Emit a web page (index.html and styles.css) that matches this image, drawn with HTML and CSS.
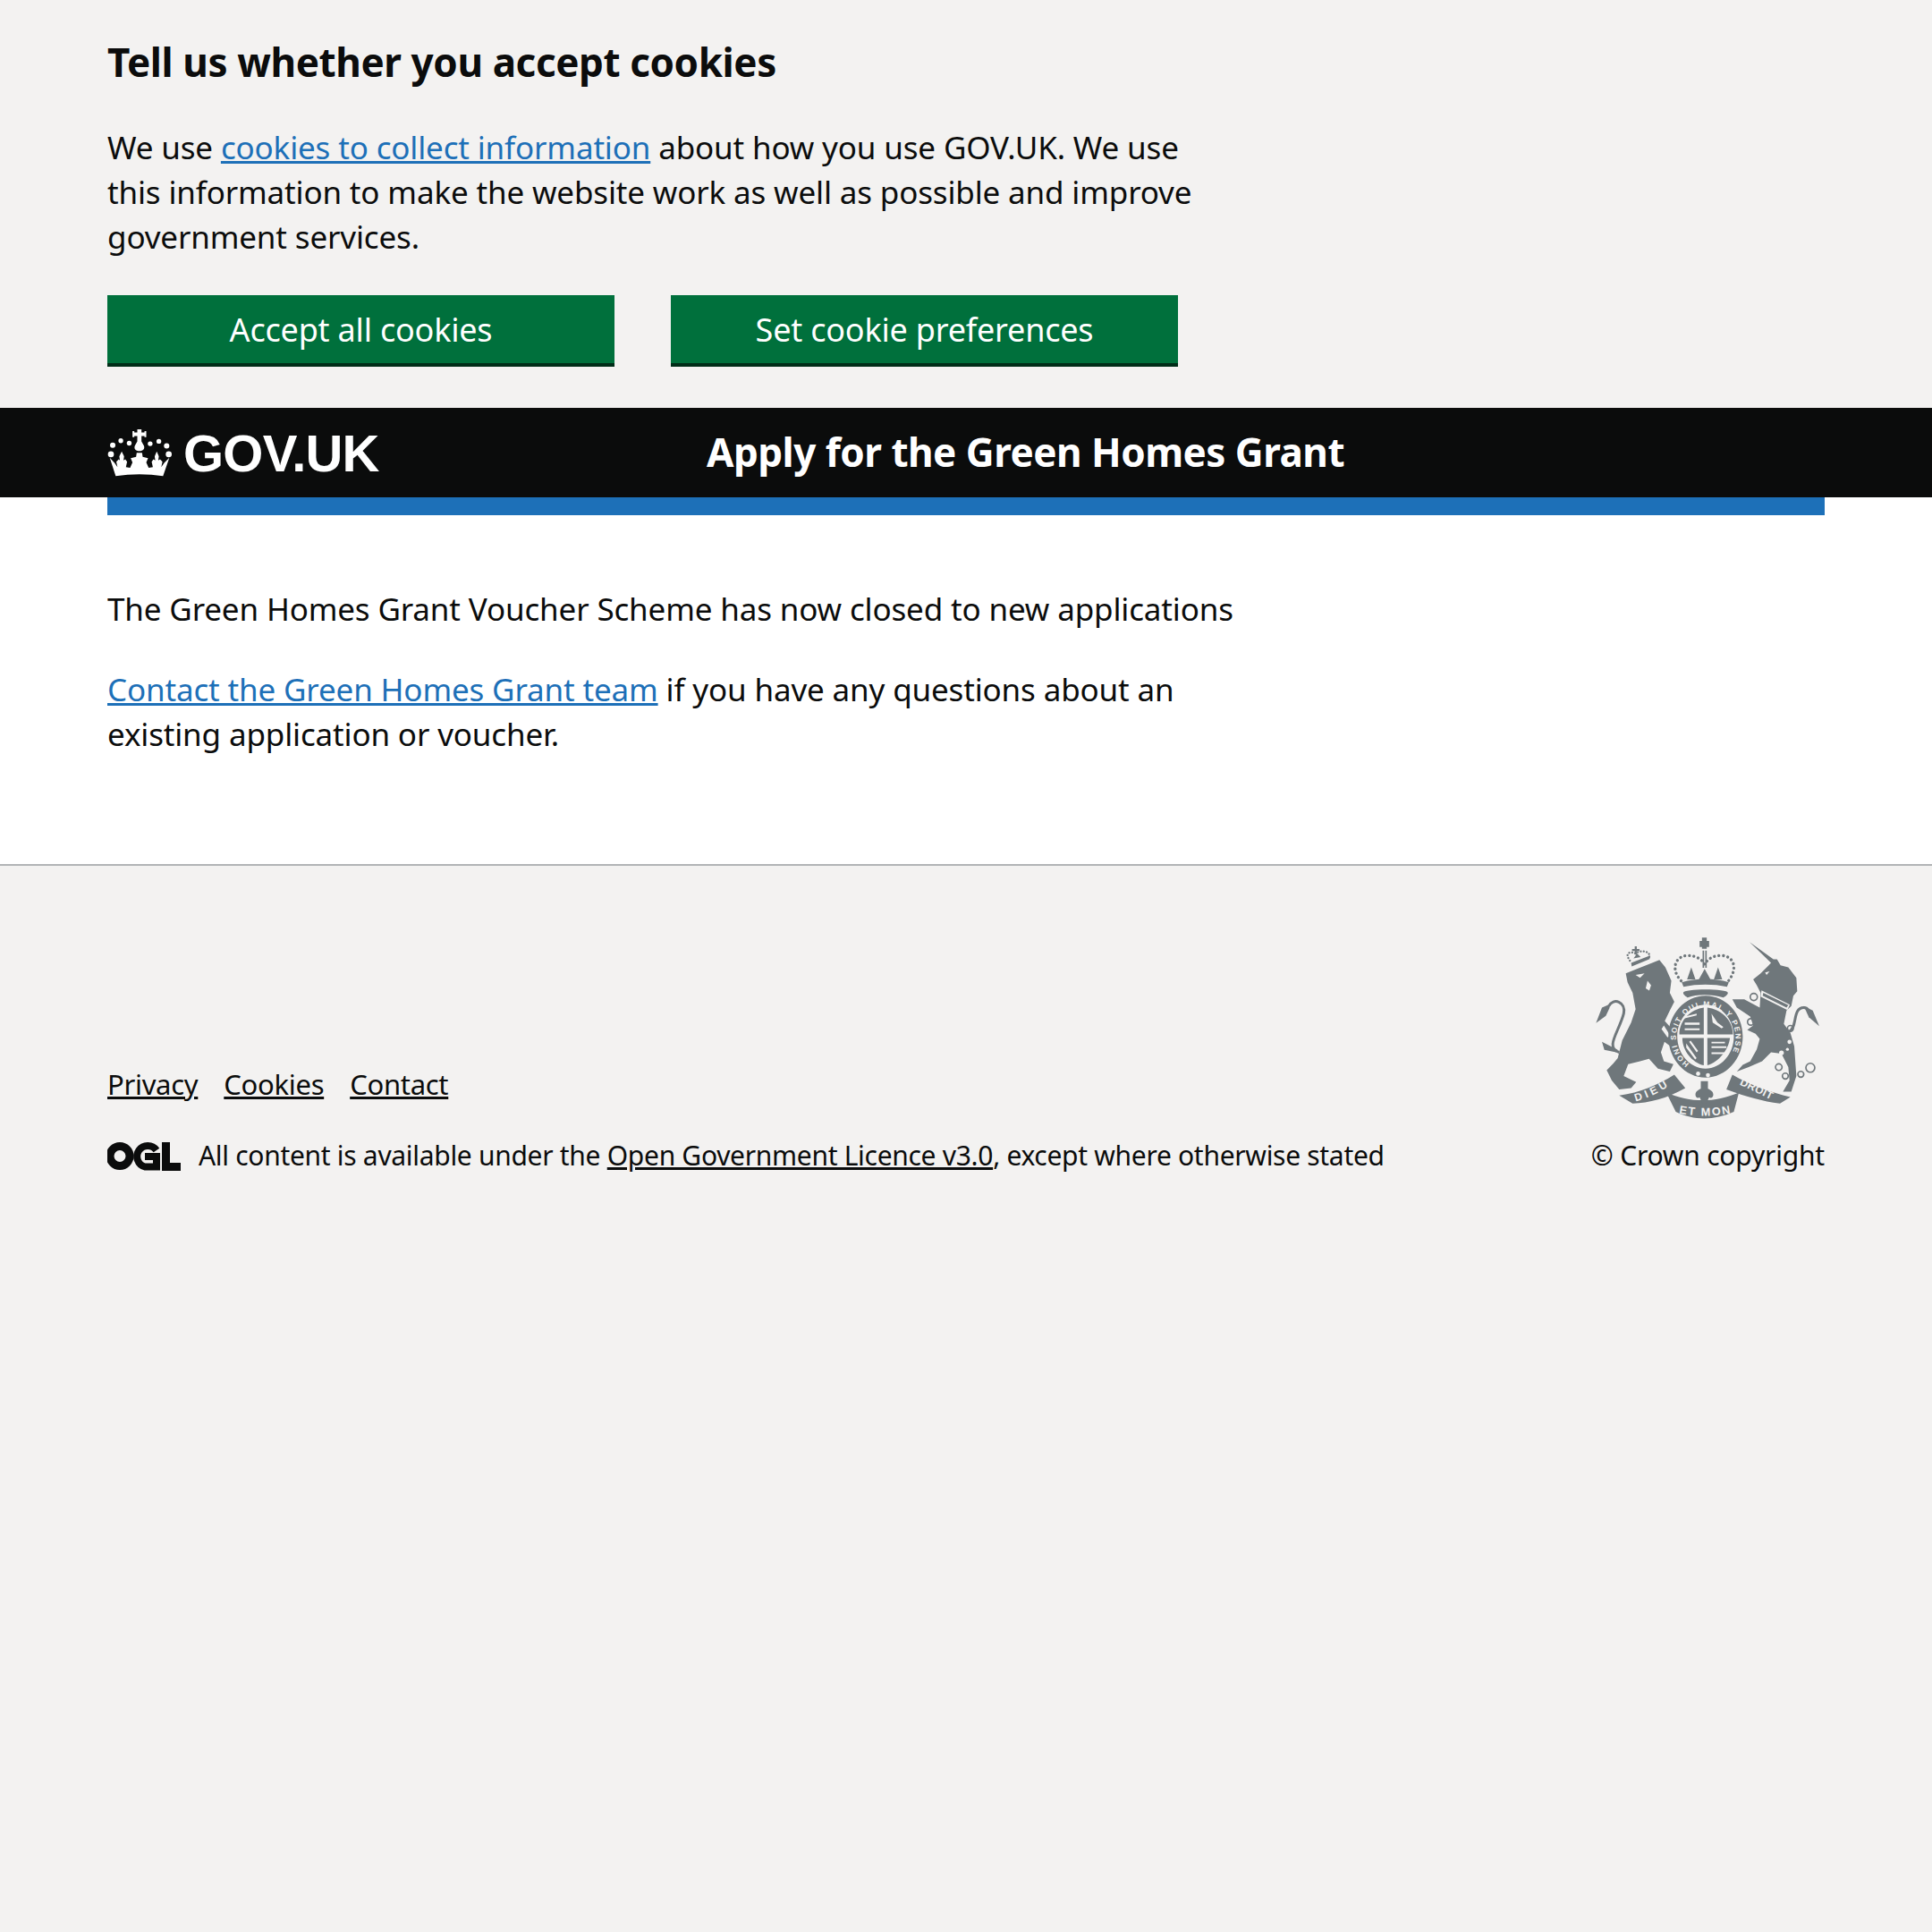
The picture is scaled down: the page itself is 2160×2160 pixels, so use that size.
FILE: index.html
```html
<!DOCTYPE html>
<html>
<head>
	<meta charset="utf-8">
	<title>Apply for the Green Homes Grant</title>
	<link rel="stylesheet" href="styles.css">
</head>
<body>
	<div class="cookie-banner">
		<h2 class="cookie-title">Tell us whether you accept cookies</h2>
		<p class="cookie-text">We use <a href="#" class="link">cookies to collect information</a> about how you use GOV.UK. We use this information to make the website work as well as possible and improve government services.</p>
		<div class="cookie-buttons">
			<a href="#" class="button">Accept all cookies</a>
			<a href="#" class="button">Set cookie preferences</a>
		</div>
	</div>

	<header class="header">
		<a href="#" class="logo">
			<svg class="crown" viewBox="0 0 215 158" fill="#fff">
				<circle cx="12" cy="83" r="10"/><circle cx="18" cy="53" r="9"/><circle cx="45" cy="38" r="8"/><circle cx="73" cy="46" r="8"/>
				<circle cx="143" cy="48" r="8"/><circle cx="172" cy="40" r="8"/><circle cx="198" cy="55" r="9"/><circle cx="205" cy="83" r="10"/>
				<path d="M100 0h14v10h10v-4h6v20h-6v-4h-10v18l8 14c4 10-2 18-15 18s-19-8-15-18l8-14V22H90v4h-6V6h6v4h10z"/>
				<path d="M28 156L8 95 24 112 34 126 30 108 38 100 42 104 40 90 48 74 56 90 54 104 60 100 66 108 62 126 76 128 84 110 78 96 96 92 98 78 116 78 118 92 136 96 130 110 138 128 152 126 148 108 154 100 160 104 158 90 165 74 172 90 170 104 176 100 184 108 180 126 190 112 207 95 186 156C135 148 80 148 28 156z"/>
			</svg>
			<span class="logo-text">GOV.UK</span>
		</a>
		<a href="#" class="service-name">Apply for the Green Homes Grant</a>
	</header>

	<div class="width-container">
		<div class="header-rule"></div>
		<main class="main">
			<p class="body-text">The Green Homes Grant Voucher Scheme has now closed to new applications</p>
			<p class="body-text"><a href="#" class="link">Contact the Green Homes Grant team</a> if you have any questions about an existing application or voucher.</p>
		</main>
	</div>

	<footer class="footer">
		<div class="footer-inner">
			<div class="footer-meta">
				<ul class="footer-links">
					<li><a href="#">Privacy</a></li>
					<li><a href="#">Cookies</a></li>
					<li><a href="#">Contact</a></li>
				</ul>
				<div class="licence">
					<svg class="ogl" viewBox="0 0 82 33">
						<circle cx="14" cy="16.5" r="11" fill="none" stroke="#0b0c0c" stroke-width="9"/>
						<path d="M55 10A12 12 0 1 0 42 28.500h13V17H42" fill="none" stroke="#0b0c0c" stroke-width="8"/>
						<path d="M61 1h9v23h12v9H61z" fill="#0b0c0c"/>
					</svg>
					<span>All content is available under the <a href="#">Open Government Licence v3.0</a>, except where otherwise stated</span>
				</div>
			</div>
			<div class="footer-crest">
				<svg class="crest" viewBox="60 45 770 625" fill="#6f777b">
					<!-- lion -->
					<path d="M172 175L215 158 255 142 285 130 305 155 325 200 320 240 335 270 320 300 303 335 330 365 345 400 322 420 302 405 290 440 300 470 332 480 320 505 280 495 250 462 220 470 180 480 165 520 207 540 190 560 150 565 125 535 108 500 130 478 145 460 160 400 190 340 205 295 195 240 178 205z"/>
					<path d="M150 440C100 425 150 370 165 310c8-40-35-55-50-25" fill="none" stroke="#6f777b" stroke-width="9"/>
					<path d="M120 278L92 290 72 342 105 318 117 292zM92 405L145 432 140 440 100 432z"/>
					<path d="M205 180L235 175 220 190zM245 200L257 215 251 233 239 225zM300 350L322 385 312 390 292 362z" fill="#f3f2f1"/>
					<!-- lion crown -->
					<path d="M192 152L252 127 254 115 190 140z"/>
					<g fill="none" stroke="#6f777b" stroke-width="7" stroke-dasharray="0.1 10" stroke-linecap="round">
						<path d="M186 132C165 105 190 100 205 108 220 95 260 100 250 122"/>
					</g>
					<path d="M202 84h7v9h9v7h-9v12h-7v-12h-9v-7h9zM198 125L210 108 222 120z"/>
					<!-- unicorn -->
					<path d="M588 70L668 128 680 128 692 148 718 155 745 190 748 235 735 250 728 285 712 300 703 345 725 375 738 420 745 520 728 572 700 572 722 535 718 490 695 445 660 440 630 470 585 490 545 505 565 482 590 470 612 430 622 395 608 378 580 365 600 350 590 320 545 290 530 262 570 262 622 290 625 240 612 215 600 195 625 175 650 150 660 140z"/>
					<path d="M720 370c30-10 10-80 50-80 15 0 20 15 15 20" fill="none" stroke="#6f777b" stroke-width="9"/>
					<path d="M770 285L800 300 822 352 787 322z"/>
					<path d="M628 232L723 280 715 298 625 253zM640 172L655 168 645 180z" fill="#f3f2f1"/>
					<path d="M634 240L718 282 712 290 632 250z"/>
					<g fill="#f3f2f1"><circle cx="722" cy="405" r="7"/><circle cx="695" cy="442" r="8"/><circle cx="715" cy="430" r="5"/></g>
					<g fill="none" stroke="#6f777b" stroke-width="5">
						<circle cx="602" cy="254" r="12"/><circle cx="592" cy="338" r="11"/><circle cx="725" cy="360" r="10"/>
						<circle cx="686" cy="490" r="11"/><circle cx="708" cy="520" r="10"/><circle cx="760" cy="514" r="10"/><circle cx="792" cy="492" r="15"/>
					</g>
					<!-- crown -->
					<g fill="none" stroke="#6f777b" stroke-width="10" stroke-dasharray="0.1 15" stroke-linecap="round">
						<path d="M358 200C320 160 340 115 380 115c30 0 50 15 57 30 10-20 30-30 55-30 40 0 60 40 25 85"/>
					</g>
					<path d="M428 55h16v11h8v20h-8v6h-16v-6h-8V66h8zM430 98h5v58h-5zM439 98h5v58h-5zM360 205c50-15 110-15 158 0l-6 15c-45-10-100-10-146 0z"/>
					<path d="M392 155L406 195H378zM437 160L459 200H415zM482 155L496 195H468z"/>
					<path d="M365 240c0-15 150-15 150 0 0 8-15 16-15 16-40-12-90-12-120 0 0 0-15-8-15-16z"/>
					<!-- garter -->
					<path fill-rule="evenodd" d="M440 250c68 0 125 60 125 137s-57 138-125 138-125-61-125-138 57-137 125-137zm0 30c-52 0-95 48-95 107s43 108 95 108 95-49 95-108-43-107-95-107z"/>
					<path id="garter" d="M385 478A100 105 0 1 1 497 478" fill="none"/>
					<text class="crest-text" font-size="25" fill="#f3f2f1"><textPath href="#garter" textLength="470">HONI SOIT QUI MAL Y PENSE</textPath></text>
					<!-- shield -->
					<path d="M352 380h82v-90c-40 5-82 40-82 90zM446 290v90h86c0-50-43-85-86-90zM362 392h72v92c-40-10-72-50-72-92zM446 392h76c-5 40-37 80-76 92z"/>
					<g fill="#f3f2f1"><path d="M370 340h50v8h-50zM370 320l40-10v6l-40 10zM370 360h50v6h-50zM460 310l20 30 20 15-6 5-30-20zM460 420h50v6h-50zM460 440h45v6h-45zM375 410l35 50-5 4-30-40zM460 405h45v5h-45zM385 405l25 35 5-4-25-35z"/></g>
					<circle cx="415" cy="512" r="7" fill="#f3f2f1"/><circle cx="448" cy="517" r="7" fill="#f3f2f1"/>
					<!-- ribbon -->
					<path d="M150 585C220 575 280 550 335 515L372 560C310 595 250 610 195 612z"/>
					<path d="M308 575C390 610 470 610 552 575L535 640C470 670 400 670 340 640z"/>
					<path d="M530 515C590 550 660 575 725 590L690 612C630 605 580 590 510 565z"/>
					<path id="rib-left" d="M205 605Q265 588 318 552" fill="none"/>
					<path id="rib-right" d="M553 548L662 600" fill="none"/>
					<path id="rib-mid" d="M350 645Q438 662 525 645" fill="none"/>
					<text class="crest-text" font-size="36" fill="#f3f2f1"><textPath href="#rib-left" textLength="120">DIEU</textPath></text>
					<text class="crest-text" font-size="36" fill="#f3f2f1"><textPath href="#rib-right" textLength="118">DROIT</textPath></text>
					<text class="crest-text" font-size="38" fill="#f3f2f1"><textPath href="#rib-mid" textLength="175">ET MON</textPath></text>
					<!-- fleur -->
					<path d="M424 537h24v26h-24zM436 555c14 10 30 12 30 28 0 8-8 14-14 8l-6 14-10 10-10-10-6-14c-6 6-14 0-14-8 0-16 16-18 30-28z"/>
				</svg>
				<a href="#" class="copyright">© Crown copyright</a>
			</div>
		</div>
	</footer>
</body>
</html>
```

FILE: styles.css
```css
*{margin: 0;padding: 0;box-sizing: border-box;}
html,body{height: 100%;}
body{font-family: "Noto Sans", "Liberation Sans", sans-serif;color: #0b0c0c;background: #f3f2f1;font-size: 35px;letter-spacing: -0.15px;line-height: 50px;display: flex;flex-direction: column;}
a{color: inherit;}
.link{color: #1d70b8;}

.cookie-banner{background: #f3f2f1;padding: 39px 120px 46px;}
.cookie-title{font-size: 44px;letter-spacing: -0.4px;line-height: 60px;font-weight: 700;margin-bottom: 41px;}
.cookie-text{width: 1250px;margin-bottom: 40px;}
.cookie-buttons{display: flex;gap: 63px;}
.button{width: 567px;height: 80px;background: #00703c;border-bottom: 4px solid #002d18;color: #fff;text-decoration: none;text-align: center;font-size: 36px;letter-spacing: -0.2px;line-height: 78px;}

.header{background: #0b0c0c;height: 100px;padding: 0 120px;display: flex;align-items: center;}
.logo{width: 670px;padding-top: 2px;display: flex;align-items: center;gap: 13px;color: #fff;text-decoration: none;}
.crown{width: 72px;height: 53px;margin-top: -2px;}
.logo-text{font-family: "Liberation Sans", sans-serif;font-weight: 700;font-size: 58px;letter-spacing: -0.8px;line-height: 60px;}
.service-name{padding-bottom: 2px;color: #fff;text-decoration: none;font-size: 44px;letter-spacing: -0.5px;font-weight: 700;}

.width-container{background: #fff;padding: 0 120px;}
.header-rule{height: 20px;background: #1d70b8;}
.main{padding: 80px 0 120px;}
.body-text{width: 1280px;margin-bottom: 40px;}
.body-text:last-child{margin-bottom: 0;}

.footer{flex: 1;border-top: 2px solid #b1b4b6;background: #f3f2f1;font-size: 30px;letter-spacing: -0.3px;line-height: 40px;}
.footer-inner{padding: 77px 120px 0;display: flex;justify-content: space-between;align-items: flex-end;}
.footer-links{list-style: none;display: flex;gap: 29px;margin-bottom: 40px;font-size: 31px;}
.licence{display: flex;align-items: center;gap: 20px;}
.ogl{width: 82px;height: 33px;}
.footer-crest{display: flex;flex-direction: column;align-items: flex-end;}
.crest{width: 257px;height: 208px;margin: 0 3px 19px 0;}
.crest-text{font-family: "Liberation Sans", sans-serif;font-weight: 700;letter-spacing: 0;}
.copyright{text-decoration: none;letter-spacing: -0.2px;}
```
